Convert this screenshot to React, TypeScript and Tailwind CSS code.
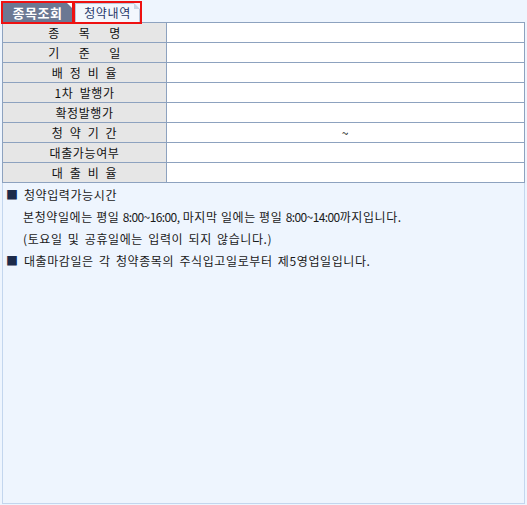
import React from 'react';

const rows: { label: string; value?: string }[] = [
  { label: '종   목   명' },
  { label: '기   준   일' },
  { label: '배 정 비 율' },
  { label: '1차 발행가' },
  { label: '확정발행가' },
  { label: '청 약 기 간', value: '~' },
  { label: '대출가능여부' },
  { label: '대 출 비 율' },
];

const App: React.FC = () => {
  return (
    <div className="w-[527px] h-[505px] bg-[#eef5fe] text-[12px] text-[#111] font-['Noto_Sans_CJK_KR',sans-serif] tracking-[0.6px] [word-spacing:2px] overflow-hidden">
      {/* Tabs */}
      <div className="flex h-[22px] pt-[3px] pl-[3px] gap-[3px]">
        <div className="relative w-[69px] h-[19px] bg-[#6b7893] outline-2 outline-[#ee1111] flex items-center justify-center">
          <span className="text-white font-bold text-[13px] tracking-[0.5px] leading-none">종목조회</span>
          <span className="absolute top-0 right-0 w-0 h-0 border-t-[5px] border-l-[5px] border-t-white border-l-transparent" />
        </div>
        <div className="relative w-[65px] h-[19px] bg-[#f3f7fd] border border-[#b9c8dc] border-b-0 outline-2 outline-[#ee1111] flex items-center justify-center">
          <span className="text-[#26376a] leading-none">청약내역</span>
          <span className="absolute -top-px -right-px w-0 h-0 border-t-[6px] border-l-[6px] border-t-[#eef5fe] border-l-[#c9d5e4]" />
        </div>
      </div>

      {/* Panel */}
      <div className="mx-[2px] h-[482px] border-x border-b border-[#c3d6ee]">
        <div className="-ml-px w-[523px] border-t border-x border-[#8da2bf]">
          {rows.map((row) => (
            <div key={row.label} className="grid grid-cols-[164px_1fr] h-[20px] border-b border-[#8da2bf]">
              <div className="bg-[#e6e6e6] border-r border-[#8da2bf] flex items-center justify-center whitespace-pre leading-none [word-spacing:3px]">
                {row.label}
              </div>
              <div className="bg-white flex items-center justify-center leading-none">{row.value}</div>
            </div>
          ))}
        </div>

        {/* Notes */}
        <div className="pt-[1px] pl-[3px] leading-[22px] text-[#1a1a1a]">
          <p>
            <span className="text-[#1d2b4a]">■</span> 청약입력가능시간
          </p>
          <p className="pl-[17px] [word-spacing:0px]">
            본청약일에는 평일 <span className="tracking-[-0.6px]">8:00~16:00,</span> 마지막 일에는 평일{' '}
            <span className="tracking-[-0.6px]">8:00~14:00</span>까지입니다.
          </p>
          <p className="pl-[17px]">(토요일 및 공휴일에는 입력이 되지 않습니다.)</p>
          <p>
            <span className="text-[#1d2b4a]">■</span> 대출마감일은 각 청약종목의 주식입고일로부터 제5영업일입니다.
          </p>
        </div>
      </div>
    </div>
  );
};

export default App;
